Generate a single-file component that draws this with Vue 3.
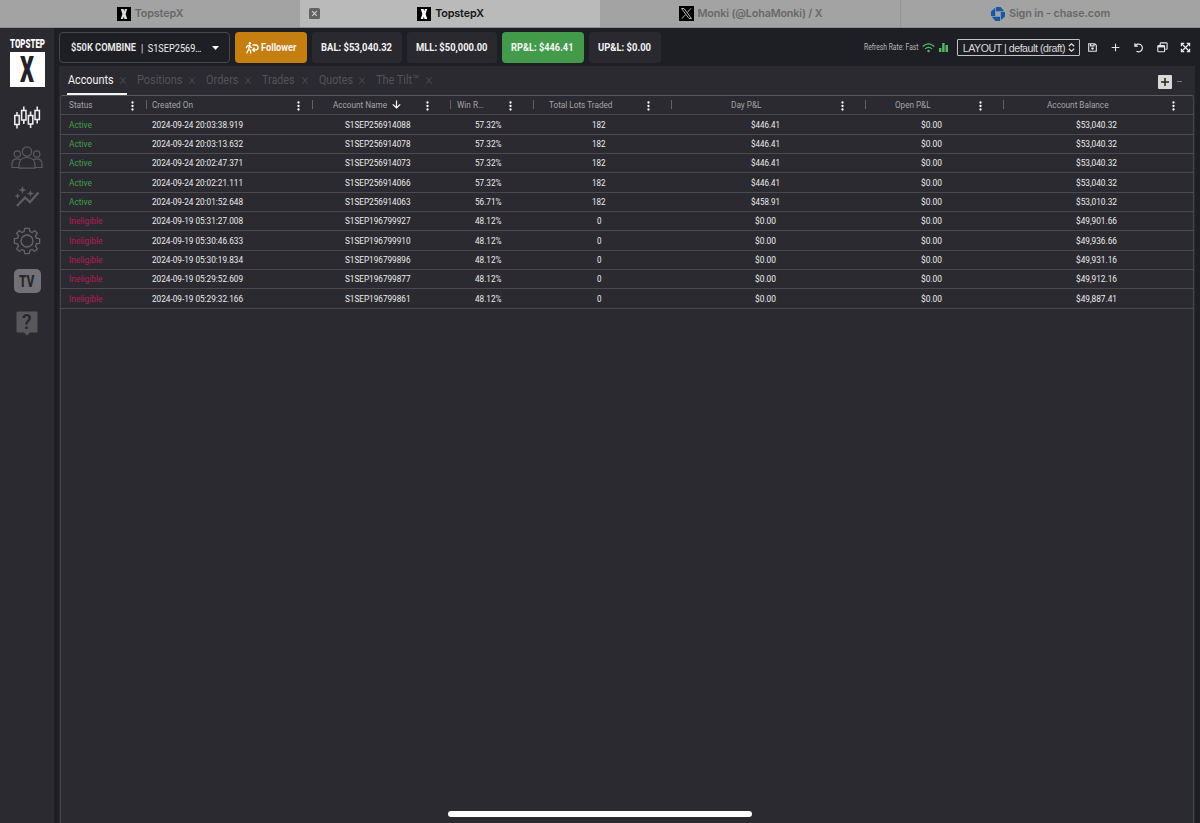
<script setup>
import { h } from 'vue'

// Condensed label: a line of Roboto fitted to a given width.
const T = (p) =>
  h('svg', { width: p.w, height: p.s, style: { display: 'block', overflow: 'visible', flex: 'none' } }, [
    h('text', {
      x: 0,
      y: p.s * 0.857,
      fill: 'currentColor',
      'font-size': p.s,
      'font-weight': p.b || 400,
      'font-family': 'Roboto, "Liberation Sans", sans-serif',
      textLength: p.w,
      lengthAdjust: 'spacingAndGlyphs',
    }, p.t),
  ])
T.props = ['t', 'w', 's', 'b']

const tabs = [
  { t: 'Accounts', w: 45.5 },
  { t: 'Positions', w: 45.5 },
  { t: 'Orders', w: 32.5 },
  { t: 'Trades', w: 32.5 },
  { t: 'Quotes', w: 34 },
  { t: 'The Tilt™', w: 43 },
]

const cols = [
  { t: 'Status', w: 23.5, left: true },
  { t: 'Created On', w: 41, left: true },
  { t: 'Account Name', w: 54, sort: true },
  { t: 'Win R…', w: 26.5 },
  { t: 'Total Lots Traded', w: 63.5 },
  { t: 'Day P&L', w: 30.5 },
  { t: 'Open P&L', w: 35.5 },
  { t: 'Account Balance', w: 61.5 },
]

const data = [
  ['Active', '2024-09-24 20:03:38.919', 'S1SEP256914088', '57.32%', '182', '$446.41', '$0.00', '$53,040.32'],
  ['Active', '2024-09-24 20:03:13.632', 'S1SEP256914078', '57.32%', '182', '$446.41', '$0.00', '$53,040.32'],
  ['Active', '2024-09-24 20:02:47.371', 'S1SEP256914073', '57.32%', '182', '$446.41', '$0.00', '$53,040.32'],
  ['Active', '2024-09-24 20:02:21.111', 'S1SEP256914066', '57.32%', '182', '$446.41', '$0.00', '$53,040.32'],
  ['Active', '2024-09-24 20:01:52.648', 'S1SEP256914063', '56.71%', '182', '$458.91', '$0.00', '$53,010.32'],
  ['Ineligible', '2024-09-19 05:31:27.008', 'S1SEP196799927', '48.12%', '0', '$0.00', '$0.00', '$49,901.66'],
  ['Ineligible', '2024-09-19 05:30:46.633', 'S1SEP196799910', '48.12%', '0', '$0.00', '$0.00', '$49,936.66'],
  ['Ineligible', '2024-09-19 05:30:19.834', 'S1SEP196799896', '48.12%', '0', '$0.00', '$0.00', '$49,931.16'],
  ['Ineligible', '2024-09-19 05:29:52.609', 'S1SEP196799877', '48.12%', '0', '$0.00', '$0.00', '$49,912.16'],
  ['Ineligible', '2024-09-19 05:29:32.166', 'S1SEP196799861', '48.12%', '0', '$0.00', '$0.00', '$49,887.41'],
]
const widths = [0, 91, 65.5, 26.5, 0, 29, 21, 41]
const cellWidth = (v, i) => {
  if (i === 0) return v === 'Active' ? 23 : 33.5
  if (i === 4) return v === '0' ? 4.5 : 13.5
  if (i === 5) return v === '$0.00' ? 21 : 29
  return widths[i]
}
</script>

<template>
  <div class="screen">
    <div class="browser">
      <div class="btab">
        <svg class="fav" width="14" height="14" viewBox="0 0 14 14"><rect width="14" height="14" fill="#000" /><path d="M3.800 2H6.600L7.200 4.400 7.800 2H10.200L8.600 6.900 10.300 12H7.500L6.800 9.400 6.100 12H3.700L5.400 6.900Z" fill="#ddd" /></svg>
        <span>TopstepX</span>
      </div>
      <div class="btab active">
        <svg class="close" width="11" height="11" viewBox="0 0 11 11"><rect width="11" height="11" rx="1.500" fill="#626262" /><path d="M3.200 3.200L7.800 7.800M7.800 3.200L3.200 7.800" stroke="#ccc" stroke-width="1.200" /></svg>
        <svg class="fav" width="14" height="14" viewBox="0 0 14 14"><rect width="14" height="14" fill="#000" /><path d="M3.800 2H6.600L7.200 4.400 7.800 2H10.200L8.600 6.900 10.300 12H7.500L6.800 9.400 6.100 12H3.700L5.400 6.900Z" fill="#fff" /></svg>
        <span>TopstepX</span>
      </div>
      <div class="btab">
        <svg class="fav" width="15" height="15" viewBox="0 0 15 15"><rect width="15" height="15" fill="#000" /><path d="M2.500 2.500H5L12.500 12.500H10ZM12 2.300L8.300 6.500M6.700 8.500L2.800 12.700" fill="none" stroke="#c4c4c4" stroke-width=".9" /></svg>
        <span class="monki">Monki (@LohaMonki) / X</span>
      </div>
      <div class="btab">
        <svg class="fav" width="14" height="14" viewBox="0 0 14 14" fill="#1557a8"><path d="M5 0H9.600L13.200 4.200H5Z" /><path d="M14 5V9.600L9.800 13.200V5Z" /><path d="M9 14H4.400L.8 9.800H9Z" /><path d="M0 9V4.400L4.200.8V9Z" /></svg>
        <span class="chase">Sign in - chase.com</span>
      </div>
    </div>

    <div class="app">
      <aside class="side">
        <div class="brand"><T t="TOPSTEP" :w="35" :s="13.600" b="900" /></div>
        <div class="logo"><T t="X" :w="14" :s="37.500" b="900" /></div>

        <svg class="i-candles" width="28" height="26" viewBox="0 0 28 26" fill="none" stroke="#f2f2f2" stroke-width="1.500">
          <path d="M1.800 10.500h4.400v9H1.800zM8.600 5.500h4.400v9.500H8.600zM15.400 10.500h4.400v8.500h-4.400zM22 5.500h4.400v9H22z" />
          <path d="M4 7v3.500M4 19.500v4M10.800 1.500v4M10.800 15v4M17.600 6.500v4M17.600 19v4M24.200 1.500v4M24.200 14.500v4" />
        </svg>
        <svg class="i-people" width="32" height="23" viewBox="0 0 32 23" fill="none" stroke="#5b5b5f" stroke-width="1.200">
          <circle cx="16" cy="5.500" r="4.600" /><circle cx="6.300" cy="8" r="3.200" /><circle cx="25.700" cy="8" r="3.200" />
          <path d="M8 22.200V19c0-4.500 3-7.500 8-7.500s8 3 8 7.500v3.200zM8 21.500H1V18c0-3 2-5.200 5.300-5.200 1.500 0 2.800.5 3.800 1.200M24 21.500h7V18c0-3-2-5.200-5.300-5.200-1.500 0-2.800.5-3.800 1.200" />
        </svg>
        <svg class="i-spark" width="26" height="22" viewBox="0 0 26 22" fill="#5e5e62">
          <path d="M3 20L11 11.500 16 16 24.500 6.500" fill="none" stroke="#5e5e62" stroke-width="2.300" />
          <path d="M8.500 0l1.100 2.900L12.500 4 9.600 5.100 8.500 8 7.400 5.100 4.500 4 7.400 2.900zM16.500 4l.9 2.600 2.600.9-2.600.9-.9 2.600-.9-2.600L13 7.500l2.600-.9zM3.500 7l.8 2.200 2.200.8-2.200.8L3.500 13l-.8-2.200L.5 10l2.200-.8z" />
        </svg>
        <svg class="i-gear" width="28" height="28" viewBox="-14 -14 28 28" fill="none" stroke="#66666a" stroke-width="1.300">
          <circle r="6" />
          <path d="M-2.300-12.600H2.300L2.900-9.400 5.200-8.400 7.700-10.400 10.400-7.700 8.400-5.200 9.400-2.900 12.600-2.300V2.300L9.400 2.900 8.400 5.200 10.400 7.700 7.700 10.400 5.200 8.400 2.900 9.400 2.300 12.600H-2.300L-2.900 9.400-5.200 8.400-7.700 10.400-10.400 7.700-8.400 5.200-9.400 2.900-12.600 2.300V-2.300L-9.400-2.900-8.400-5.200-10.400-7.700-7.700-10.400-5.200-8.400-2.900-9.400Z" />
        </svg>
        <div class="tv"><T t="TV" :w="15.500" :s="16" b="900" /></div>
        <div class="help">
          <svg width="22" height="26" viewBox="0 0 22 26"><path d="M1.500 0.500h19q1 0 1 1v19q0 1-1 1H14l-3 3.300-3-3.300H1.500q-1 0-1-1v-19q0-1 1-1z" fill="#58585a" /></svg>
          <div class="q"><T t="?" :w="9.500" :s="20" b="500" /></div>
        </div>
      </aside>

      <main class="main">
        <header class="top">
          <div class="acct">
            <T t="$50K COMBINE" :w="65" :s="11" b="600" />
            <T class="acctno" :t="'|\u00a0\u00a0S1SEP2569…'" :w="60.500" :s="11.200" />
            <svg class="caret" width="7" height="4" viewBox="0 0 7 4"><path d="M0 0h7L3.500 4z" fill="#fff" /></svg>
          </div>
          <div class="pill follower">
            <svg width="14" height="12" viewBox="0 0 14 12" fill="none" stroke="#fff" stroke-width="1.300">
              <circle cx="4.900" cy="1.300" r="1.200" fill="#fff" stroke="none" />
              <path d="M1.200 6.200L2.200 4 4.500 3.200 3.600 7.500 1.600 11.300M3.800 7.200L5.600 8.600V11.500M4.800 3.600L5.800 5.300 7.200 5.700" />
              <path d="M7.500 3h3.200a2.300 2.300 0 0 1 0 4.800H8M9.700 5.800L7.700 7.800 9.700 9.900" />
            </svg>
            <T t="Follower" :w="35.500" :s="11" b="700" />
          </div>
          <div class="pill bal"><T t="BAL: $53,040.32" :w="71" :s="11" b="700" /></div>
          <div class="pill mll"><T t="MLL: $50,000.00" :w="71.500" :s="11" b="700" /></div>
          <div class="pill rpl"><T t="RP&L: $446.41" :w="62.500" :s="11" b="700" /></div>
          <div class="pill upl"><T t="UP&L: $0.00" :w="53" :s="11" b="700" /></div>

          <div class="tools">
            <T class="rate" t="Refresh Rate: Fast" :w="54.500" :s="8.300" />
            <svg class="wifi" width="13" height="10" viewBox="0 0 13 10" fill="none" stroke="#57c06a" stroke-width="1.200"><path d="M.7 3.500Q6.500-1.700 12.300 3.500M3 5.900Q6.500 2.900 10 5.900" /><circle cx="6.500" cy="8" r="1.200" fill="#57c06a" stroke="none" /></svg>
            <svg class="bars" width="9" height="9" viewBox="0 0 9 9" fill="#4fb963"><path d="M0 5h2.400v4H0zM3.200 0h2.400v9H3.200zM6.500 2H9v7H6.500z" /></svg>
            <div class="layout">
              <span>LAYOUT | default (draft)</span>
              <svg width="7" height="9" viewBox="0 0 7 9" fill="none" stroke="#e0e0e0" stroke-width="1.200"><path d="M.8 3.300L3.500.8 6.200 3.300M.8 5.700L3.500 8.200 6.200 5.700" /></svg>
            </div>
            <div class="icons">
              <svg width="11" height="11" viewBox="0 0 11 11" fill="none" stroke="#e6e6e6" stroke-width="1.100"><path d="M1.700 1.700H7.700L9.300 3.300v6H1.700zM3.500 1.700v2.200h3.500V1.700" /><circle cx="5.500" cy="6.500" r="1.200" fill="#e6e6e6" stroke="none" /></svg>
              <svg width="11" height="11" viewBox="0 0 11 11" fill="none" stroke="#e6e6e6" stroke-width="1.100"><path d="M5.500 1.700v7.600M1.700 5.500h7.600" /></svg>
              <svg width="11" height="11" viewBox="0 0 11 11" fill="none" stroke="#e6e6e6" stroke-width="1.200"><path d="M.9 1.200V4.200H3.900M1.100 4A3.900 3.900 0 1 1 2.500 9.300" /></svg>
              <svg width="11" height="11" viewBox="0 0 11 11" fill="none" stroke="#e6e6e6" stroke-width="1.100"><rect x=".8" y="3.600" width="6.800" height="6.200" rx=".8" /><path d="M.8 4.600h6.800" stroke-width="1.600" /><path d="M3.200 3V1.700q0-.8.8-.8h5.200q.9 0 .9.8v4.700q0 .8-.8.8H8.300" /></svg>
              <svg width="11" height="11" viewBox="0 0 11 11" fill="none" stroke="#e6e6e6" stroke-width="1.200"><path d="M2 2l7 7M9 2L2 9" /><path d="M1.400 4.200V1.400h2.800M6.800 1.400h2.800v2.800M9.600 6.800v2.800H6.800M4.200 9.600H1.400V6.800" /></svg>
            </div>
          </div>
        </header>

        <section class="panel">
          <nav class="tabs">
            <div v-for="(t, i) in tabs" :key="t.t" class="tab" :class="{ on: i === 0 }">
              <T :t="t.t" :w="t.w" :s="13.100" />
              <svg class="tx" width="6" height="7" viewBox="0 0 6 7"><path d="M.5.4L5.500 6.600M5.500.4L.5 6.600" stroke="#4d4c51" stroke-width="1" /></svg>
            </div>
            <div class="tabtools">
              <svg width="14" height="14" viewBox="0 0 14 14"><rect width="14" height="14" rx="1" fill="#d9dad5" /><path d="M7 3v8M3 7h8" stroke="#222" stroke-width="1.500" /></svg>
              <i class="dash"></i>
            </div>
          </nav>

          <div class="grid">
            <div class="row head">
              <div v-for="(c, i) in cols" :key="c.t" class="hcell" :class="{ left: c.left, first: i === 0 }">
                <T :t="c.t" :w="c.w" :s="9.800" />
                <svg v-if="c.sort" class="sort" width="9" height="9" viewBox="0 0 9 9" fill="none" stroke="#fff" stroke-width="1.200"><path d="M4.500.5v7.300M.8 4.300L4.500 8 8.200 4.300" /></svg>
                <svg class="dots" width="3" height="10" viewBox="0 0 3 10" fill="#fff"><circle cx="1.500" cy="1.500" r="1.150" /><circle cx="1.500" cy="5" r="1.150" /><circle cx="1.500" cy="8.500" r="1.150" /></svg>
              </div>
            </div>
            <div v-for="r in data" :key="r[1]" class="row">
              <div v-for="(v, i) in r" :key="i" class="cell" :class="{ left: i < 2, ok: v === 'Active', bad: v === 'Ineligible' }">
                <T :t="v" :w="cellWidth(v, i)" :s="9.800" />
              </div>
            </div>
          </div>
        </section>
      </main>
    </div>
    <div class="home"></div>
  </div>
</template>

<style>
body { background: #1e1e25; }
</style>

<style scoped>
* { box-sizing: border-box; }
.screen { width: 1200px; height: 823px; display: flex; flex-direction: column; background: #1e1e25; position: relative; overflow: hidden; font-family: Roboto, "Liberation Sans", sans-serif; }
.browser { height: 28px; flex: none; display: grid; grid-template-columns: repeat(4, 1fr); background: #a3a3a3; border-bottom: 1px solid #8a8a8c; }
.btab { display: flex; align-items: center; justify-content: center; gap: 4px; font: 600 10.800px Inter, "Liberation Sans", sans-serif; color: #686868; position: relative; white-space: nowrap; }
.btab + .btab { border-left: 1px solid #959595; }
.btab.active { background: #bababa; color: #151515; border-left-color: #bababa; }
.btab.active + .btab { border-left-color: #a3a3a3; }
.btab span { letter-spacing: -0.140px; }
.btab .monki { letter-spacing: -0.170px; }
.btab .chase { letter-spacing: -0.120px; }
.close { position: absolute; left: 8px; top: 8px; }

.app { flex: 1; display: flex; min-height: 0; }
.side { width: 54px; background: #2b2a30; display: flex; flex-direction: column; align-items: center; flex: none; }
.brand { margin-top: 7.500px; color: #fff; }
.logo { margin-top: 2.900px; width: 35px; height: 35px; background: #fff; color: #222228; display: flex; align-items: center; justify-content: center; padding-bottom: 1.500px; flex: none; }
.i-candles { margin-top: 18.500px; }
.i-people { margin-top: 14.500px; }
.i-spark { margin-top: 17.500px; }
.i-gear { margin-top: 18.500px; }
.tv { margin-top: 14.500px; width: 27px; height: 24px; border-radius: 5px; background: #727276; color: #29282e; display: flex; align-items: center; justify-content: center; padding-bottom: 1px; flex: none; }
.help { margin-top: 18px; position: relative; color: #26252a; }
.q { position: absolute; left: 6px; top: 1px; }

.main { flex: 1; min-width: 0; margin: 0 5px; display: flex; flex-direction: column; }
.top { height: 38px; display: flex; align-items: flex-start; padding-top: 4px; flex: none; }
.acct { width: 171px; height: 31px; border: 1px solid #47464c; border-radius: 4px; display: flex; align-items: center; color: #eee; padding-left: 11px; margin-right: 5px; }
.acctno { margin-left: 5px; }
.caret { margin-left: 10px; }
.pill { height: 31px; border-radius: 4px; background: #2a292f; color: #f4f4f4; display: flex; align-items: center; justify-content: center; margin-right: 5px; padding-right: 1px; }
.follower { width: 72px; background: #c47f10; gap: 2px; }
.bal { width: 90px; }
.mll { width: 90px; }
.rpl { width: 82px; background: #439a4b; }
.upl { width: 72px; margin-right: 0; }
.tools { margin-left: auto; height: 31px; display: flex; align-items: center; color: #b9b9bb; }
.wifi { margin-left: 3.500px; }
.bars { margin-left: 4px; }
.layout { margin-left: 9px; width: 123px; height: 17px; border: 1px solid #c4c4c6; display: flex; align-items: center; justify-content: space-between; padding: 0 4px 0 5px; font: 10.600px "Liberation Sans", Arial, sans-serif; color: #dadada; white-space: nowrap; border-radius: 1px; }
.layout span { letter-spacing: -0.450px; }
.icons { display: flex; gap: 12.200px; margin: 0 4px 0 7.500px; }

.panel { flex: 1; background: #2b2a30; display: flex; flex-direction: column; min-height: 0; }
.tabs { height: 29px; flex: none; display: flex; padding-left: 8px; gap: 10px; }
.tab { display: flex; align-items: center; color: #535257; gap: 6.700px; height: 28.500px; border-bottom: 2px solid transparent; padding-right: 1px; }
.tab.on { color: #f2f2f2; border-bottom-color: #f2f2f2; padding-left: 1px; gap: 6.500px; }
.tx { margin-top: 3px; }
.tabtools { margin-left: auto; display: flex; align-items: center; gap: 5px; padding: 2px 13.500px 0 0; }
.dash { width: 5px; height: 1px; background: #77777a; }

.grid { flex: 1; margin: 0 1px; border: 1px solid #47464b; border-top: 1px solid #5b5a60; border-bottom: 0; border-radius: 3px 3px 0 0; min-height: 0; }
.row { display: grid; grid-template-columns: 82px 166px 138px 83px 138px 194px 138px 193px; height: 19.330px; border-bottom: 1px solid #4b4a4f; color: #ededed; }
.head { color: #a5a4a8; }
.hcell { display: flex; align-items: center; justify-content: center; padding: 0 37px 1px 0; position: relative; }
.hcell::before { content: ''; position: absolute; left: 3px; top: 4px; width: 1px; height: 9px; background: #626166; }
.hcell.first::before { display: none; }
.sort { margin: 0 -14px 0 5px; flex: none; }
.dots { position: absolute; right: 18.500px; top: 4.500px; }
.left { justify-content: flex-start; padding-left: 9px; }
.hcell.first { padding-left: 8px; }
.hcell.left .dots { right: 9.500px; }
.cell { display: flex; align-items: center; justify-content: center; }
.cell.left { justify-content: flex-start; padding-left: 9px; }
.cell.left:first-child { padding-left: 8px; }
.ok { color: #3f9f4a; }
.bad { color: #b01d52; }
.home { position: absolute; left: 448px; top: 811px; width: 304px; height: 6px; border-radius: 3px; background: #fff; }
</style>
